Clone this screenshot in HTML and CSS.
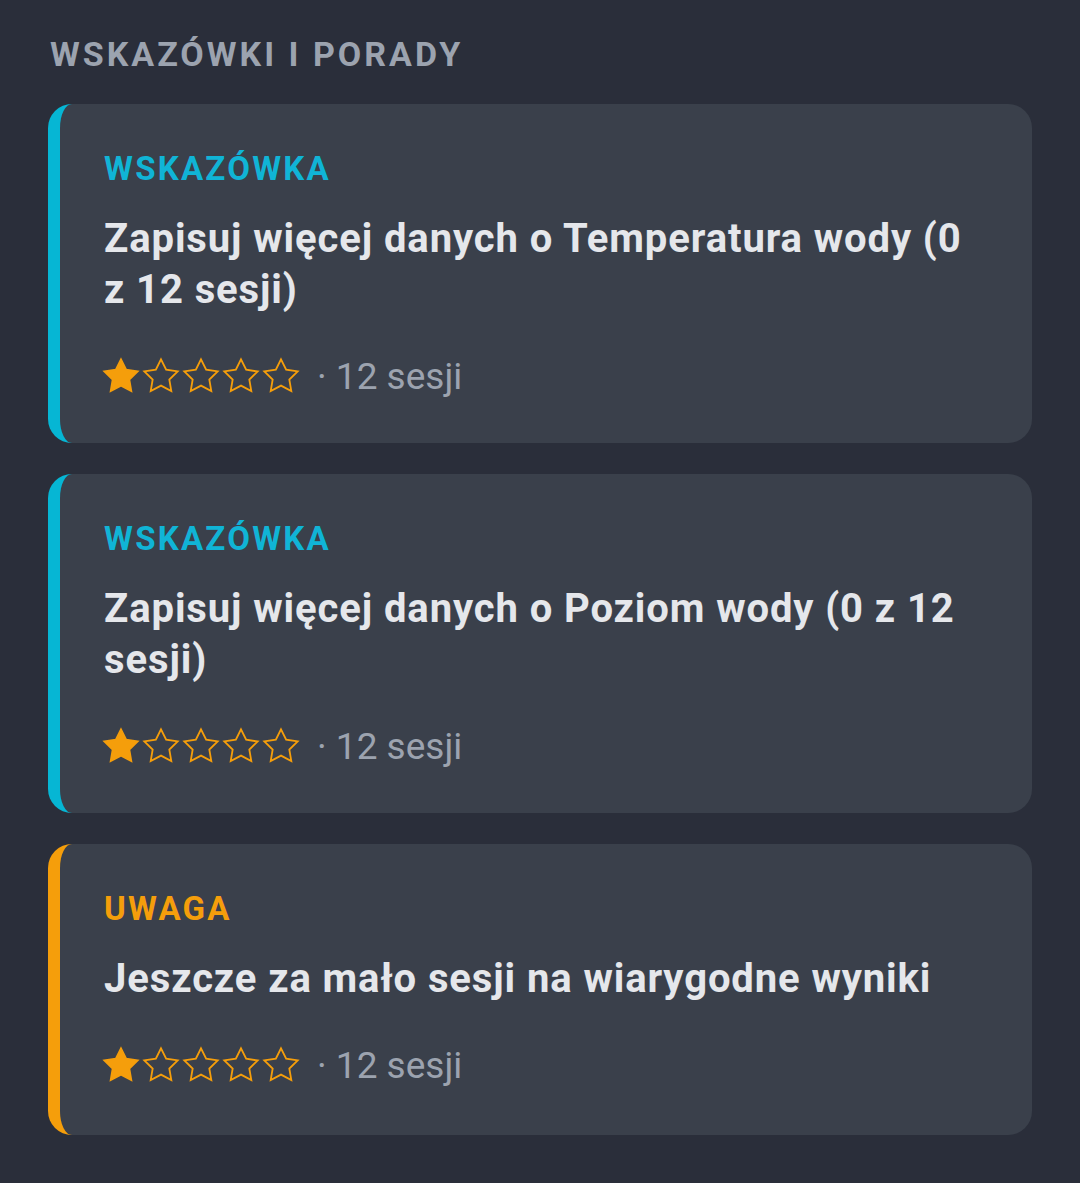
FILE: index.html
```html
<!DOCTYPE html>
<html lang="pl">
<head>
  <meta charset="UTF-8" />
  <meta name="viewport" content="width=device-width, initial-scale=1.0"/>
  <title>Wskazówki i porady</title>
  <link rel="stylesheet" href="styles.css">
</head>
<body>
  <svg width="0" height="0" class="defs">
    <defs>
      <path id="star" d="M12 2l3.09 6.26L22 9.27l-5 4.87 1.18 6.88L12 17.77l-6.18 3.25L7 14.14 2 9.27l6.91-1.01L12 2z"/>
    </defs>
  </svg>

  <div class="container">
    <h2 class="section-title">Wskazówki i porady</h2>

    <div class="tip-card tip">
      <div class="tip-label">Wskazówka</div>
      <div class="tip-text">Zapisuj więcej danych o Temperatura wody (0 z 12 sesji)</div>
      <div class="tip-meta">
        <span class="stars">
          <svg class="star on" viewBox="0 0 24 24"><use href="#star"/></svg>
          <svg class="star" viewBox="0 0 24 24"><use href="#star"/></svg>
          <svg class="star" viewBox="0 0 24 24"><use href="#star"/></svg>
          <svg class="star" viewBox="0 0 24 24"><use href="#star"/></svg>
          <svg class="star" viewBox="0 0 24 24"><use href="#star"/></svg>
        </span>
        <span class="sessions">· 12 sesji</span>
      </div>
    </div>

    <div class="tip-card tip">
      <div class="tip-label">Wskazówka</div>
      <div class="tip-text">Zapisuj więcej danych o Poziom wody (0 z 12 sesji)</div>
      <div class="tip-meta">
        <span class="stars">
          <svg class="star on" viewBox="0 0 24 24"><use href="#star"/></svg>
          <svg class="star" viewBox="0 0 24 24"><use href="#star"/></svg>
          <svg class="star" viewBox="0 0 24 24"><use href="#star"/></svg>
          <svg class="star" viewBox="0 0 24 24"><use href="#star"/></svg>
          <svg class="star" viewBox="0 0 24 24"><use href="#star"/></svg>
        </span>
        <span class="sessions">· 12 sesji</span>
      </div>
    </div>

    <div class="tip-card warning">
      <div class="tip-label">Uwaga</div>
      <div class="tip-text">Jeszcze za mało sesji na wiarygodne wyniki</div>
      <div class="tip-meta">
        <span class="stars">
          <svg class="star on" viewBox="0 0 24 24"><use href="#star"/></svg>
          <svg class="star" viewBox="0 0 24 24"><use href="#star"/></svg>
          <svg class="star" viewBox="0 0 24 24"><use href="#star"/></svg>
          <svg class="star" viewBox="0 0 24 24"><use href="#star"/></svg>
          <svg class="star" viewBox="0 0 24 24"><use href="#star"/></svg>
        </span>
        <span class="sessions">· 12 sesji</span>
      </div>
    </div>
  </div>
</body>
</html>
```

FILE: styles.css
```css
* {
  margin: 0;
  padding: 0;
  box-sizing: border-box;
}

body {
  font-family: Roboto, 'Noto Sans', sans-serif;
  background-color: #2a2e3a;
  color: #e5e7eb;
}

.defs {
  position: absolute;
}

.container {
  padding: 34px 48px 48px;
  display: flex;
  flex-direction: column;
  gap: 31px;
}

.section-title {
  font-size: 34px;
  font-weight: 700;
  letter-spacing: 3px;
  text-transform: uppercase;
  color: #9ca3af;
  padding-left: 2px;
  margin-bottom: -1px;
}

.tip-card {
  background-color: #3a404b;
  border-radius: 24px;
  border-left: 12px solid #06b6d4;
  padding: 45px 44px 43px;
}

.tip-card.warning {
  border-left-color: #f59e0b;
  padding-bottom: 46px;
}

.tip-label {
  font-size: 33px;
  font-weight: 700;
  letter-spacing: 2.25px;
  text-transform: uppercase;
  color: #10b4d6;
  line-height: 40px;
}

.warning .tip-label {
  color: #f59e0b;
}

.tip-text {
  margin-top: 24px;
  font-size: 40px;
  font-weight: 700;
  letter-spacing: 0.9px;
  line-height: 51px;
  color: #e5e7eb;
}

.tip-meta {
  margin-top: 37px;
  display: flex;
  align-items: center;
  gap: 16px;
  height: 48px;
}

.stars {
  display: flex;
  margin-left: -3px;
}

.star {
  width: 40px;
  height: 40px;
  fill: none;
  stroke: #f59e0b;
  stroke-width: 1.1;
}

.star.on {
  fill: #f59e0b;
}

.sessions {
  font-size: 37px;
  color: #9ca3af;
}
```
